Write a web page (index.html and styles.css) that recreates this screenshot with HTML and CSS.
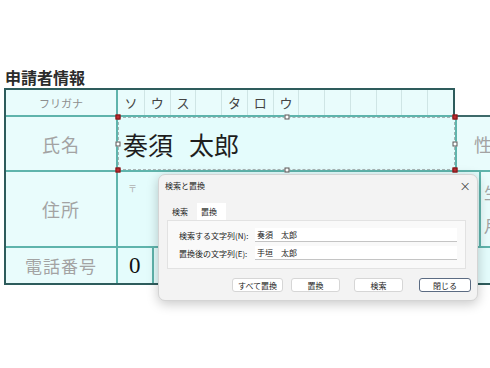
FILE: index.html
```html
<!DOCTYPE html>
<html>
<head>
	<title>申請者情報</title>
	<link rel="stylesheet" href="styles.css">
</head>
<body>
	<h2 class="title">申請者情報</h2>
	<div class="sheet">
		<div class="row row-kana">
			<div class="label label-kana">フリガナ</div>
			<div class="kana-cells">
				<span class="kana">ソ</span>
				<span class="kana">ウ</span>
				<span class="kana">ス</span>
				<span class="kana"></span>
				<span class="kana">タ</span>
				<span class="kana">ロ</span>
				<span class="kana">ウ</span>
				<span class="kana"></span>
				<span class="kana"></span>
				<span class="kana"></span>
				<span class="kana"></span>
				<span class="kana"></span>
				<span class="kana"></span>
			</div>
		</div>
		<div class="row row-name">
			<div class="label">氏名</div>
			<div class="cell name-cell">
				<span>奏須</span><span class="space"></span><span>太郎</span>
				<i class="handle corner tl"></i>
				<i class="handle corner tr"></i>
				<i class="handle corner bl"></i>
				<i class="handle corner br"></i>
				<i class="handle tm"></i>
				<i class="handle bm"></i>
				<i class="handle ml"></i>
				<i class="handle mr"></i>
			</div>
			<div class="label side">性</div>
		</div>
		<div class="row row-addr">
			<div class="label">住所</div>
			<div class="cell addr-cell"><span class="zip">〒</span></div>
			<div class="label side side-addr">生年<br>月日</div>
		</div>
		<div class="row row-tel">
			<div class="label">電話番号</div>
			<div class="cell tel-digit">0</div>
			<div class="cell tel-rest"></div>
		</div>
	</div>

	<div class="dialog">
		<div class="dlg-title">
			<span>検索と置換</span>
			<span class="close">×</span>
		</div>
		<div class="tabs">
			<span class="tab">検索</span>
			<span class="tab active">置換</span>
		</div>
		<div class="panel">
			<div class="field">
				<label for="find">検索する文字列(N):</label>
				<input type="text" id="find" value="奏須　太郎">
			</div>
			<div class="field">
				<label for="repl">置換後の文字列(E):</label>
				<input type="text" id="repl" value="手垣　太郎">
			</div>
		</div>
		<div class="buttons">
			<button class="btn btn-all">すべて置換</button>
			<button class="btn btn-repl">置換</button>
			<button class="btn btn-find">検索</button>
			<button class="btn btn-close">閉じる</button>
		</div>
	</div>
</body>
</html>
```

FILE: styles.css
```css
body {
	margin: 0;
	background-color: #ffffff;
	font-family: "Noto Sans CJK JP", "Noto Sans", sans-serif;
	color: #222;
	overflow: hidden;
}
.title {
	margin: 0;
	padding: 68px 0 2px 5px;
	font-size: 16px;
	line-height: 18px;
	font-weight: bold;
	color: #2b2b2b;
}

/* form table */
.sheet {
	margin-left: 4px;
	width: 560px;
	border-left: 2px solid #2e5c5c;
}
.row {
	display: flex;
	border-bottom: 2px solid #5fb4ac;
	background-color: #e9fcfc;
}
.row-kana {
	width: 449px;
	height: 29px;
	box-sizing: border-box;
	border-top: 2px solid #2e5c5c;
	border-right: 2px solid #2e5c5c;
}
.row-name {
	height: 55px;
	box-sizing: border-box;
}
.row-addr {
	height: 76px;
	box-sizing: border-box;
}
.row-tel {
	height: 37px;
	box-sizing: border-box;
	border-bottom-color: #2e5c5c;
}
.label {
	width: 112px;
	flex-shrink: 0;
	box-sizing: border-box;
	border-right: 2px solid #5fb4ac;
	display: flex;
	align-items: center;
	justify-content: center;
	color: #a3a3a3;
	font-size: 18px;
	letter-spacing: 1px;
}
.label-kana {
	font-size: 11px;
	color: #8e8e8e;
	letter-spacing: 0;
}
.row-tel .label {
	font-size: 17px;
}
.kana-cells {
	flex: 1;
	display: grid;
	grid-template-columns: repeat(13, 1fr);
}
.kana {
	display: flex;
	align-items: center;
	justify-content: center;
	border-left: 1px solid #cfe5e5;
	font-size: 13px;
	color: #444;
}
.kana:first-child {
	border-left: none;
}
.cell {
	box-sizing: border-box;
	background-color: #e4fcfc;
}
.name-cell {
	position: relative;
	width: 337px;
	flex-shrink: 0;
	display: flex;
	align-items: center;
	padding-left: 5px;
	font-size: 25px;
	color: #1e1e1e;
	outline: 1px dashed #a8b4b4;
	outline-offset: -1px;
}
.space {
	width: 16px;
}
.side {
	flex: 1;
	width: auto;
	justify-content: flex-start;
	padding-left: 17px;
	border-right: none;
	border-left: 2px solid #5fb4ac;
	border-top: 2px solid #3d6a6a;
	margin-top: -2px;
}
.side-addr {
	border-top: none;
	margin-top: 0;
	padding-left: 3px;
	font-size: 16px;
	line-height: 33px;
}
.addr-cell {
	width: 361px;
	flex-shrink: 0;
	padding: 1px 0 0 10px;
}
.zip {
	font-size: 9px;
	color: #b0b0b0;
}
.tel-digit {
	width: 36px;
	flex-shrink: 0;
	border-right: 2px solid #5fb4ac;
	display: flex;
	align-items: center;
	padding-left: 11px;
	font-family: "Liberation Serif", serif;
	font-size: 23px;
	color: #111;
}
.tel-rest {
	flex: 1;
}

/* selection handles */
.handle {
	position: absolute;
	width: 5px;
	height: 5px;
	box-sizing: border-box;
	transform: translate(-50%, -50%);
	background-color: #ffffff;
	border: 1px solid #555;
}
.corner {
	background-color: #c0282f;
	border-color: #7a1a1a;
}
.tl { left: 0; top: 0; }
.tr { left: 100%; top: 0; }
.bl { left: 0; top: 100%; }
.br { left: 100%; top: 100%; }
.tm { left: 50%; top: 0; }
.bm { left: 50%; top: 100%; }
.ml { left: 0; top: 50%; }
.mr { left: 100%; top: 50%; }

/* find & replace dialog */
.dialog {
	position: absolute;
	left: 158px;
	top: 174px;
	width: 320px;
	height: 127px;
	box-sizing: border-box;
	background-color: #f3f3f3;
	border: 1px solid #d4d4d4;
	border-radius: 7px;
	box-shadow: 0 3px 12px rgba(0, 0, 0, 0.22);
	font-size: 8px;
	color: #222;
}
.dlg-title {
	display: flex;
	justify-content: space-between;
	align-items: center;
	height: 21px;
	padding: 0 6px 0 6px;
}
.close {
	font-size: 14px;
	color: #333;
	font-family: "DejaVu Sans", sans-serif;
	font-weight: 300;
}
.tabs {
	display: flex;
	margin: 7px 0 0 8px;
	height: 17px;
}
.tab {
	line-height: 17px;
	padding: 0 8px 0 5px;
}
.tab.active {
	background-color: #ffffff;
	margin-left: 1px;
	padding: 0 9px 0 4px;
}
.panel {
	margin: 0 11px 0 8px;
	height: 49px;
	box-sizing: border-box;
	border: 1px solid #e2e2e2;
	background-color: #f9f9f9;
	padding: 7px 8px 0 11px;
	display: flex;
	flex-direction: column;
	gap: 4px;
}
.field {
	display: flex;
	align-items: center;
}
.field label {
	width: 76px;
	flex-shrink: 0;
}
.field input {
	flex: 1;
	height: 14px;
	box-sizing: border-box;
	border: none;
	border-bottom: 1px solid #c4c4c4;
	background-color: #ffffff;
	padding: 0 2px;
	font-family: "Noto Sans CJK JP", sans-serif;
	font-size: 8px;
	color: #222;
}
.buttons {
	display: flex;
	justify-content: flex-end;
	margin-top: 9px;
	padding-right: 6px;
}
.btn {
	height: 14px;
	padding: 0;
	box-sizing: border-box;
	background-color: #ffffff;
	border: 1px solid #d6d6d6;
	border-radius: 3px;
	font-family: "Noto Sans CJK JP", sans-serif;
	font-size: 8px;
	color: #222;
}
.btn-all {
	width: 51px;
}
.btn-repl {
	width: 49px;
	margin-left: 8px;
}
.btn-find {
	width: 49px;
	margin-left: 14px;
}
.btn-close {
	width: 52px;
	margin-left: 16px;
	border-color: #5b6b82;
}
```
